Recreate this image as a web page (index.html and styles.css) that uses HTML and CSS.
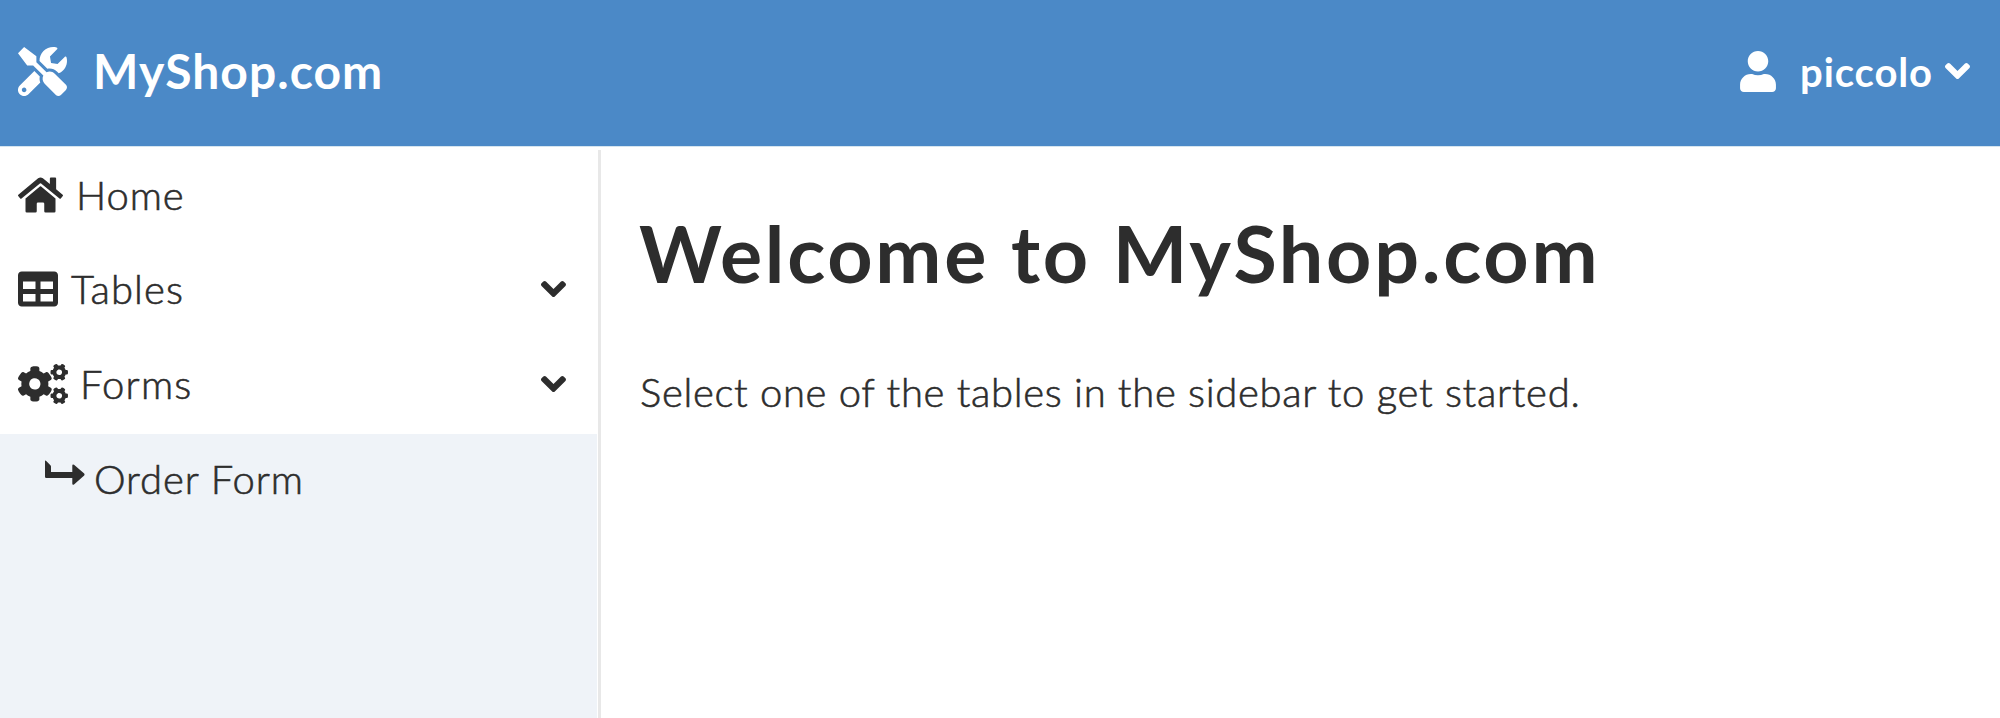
FILE: index.html
```html
<!DOCTYPE html>
<html lang="en">
<head>
<meta charset="utf-8">
<title>MyShop.com</title>
<link rel="stylesheet" href="styles.css">
</head>
<body>
<header class="topbar">
  <a class="brand">
    <svg class="brand-icon" viewBox="0 0 512 512"><path d="M501.1 395.7L384 278.6c-23.1-23.1-57.6-27.6-85.4-13.9L192 158.1V96L64 0 0 64l96 128h62.1l106.6 106.6c-13.6 27.8-9.2 62.3 13.9 85.4l117.1 117.1c14.6 14.6 38.2 14.6 52.7 0l52.7-52.7c14.5-14.6 14.5-38.2 0-52.7zM331.7 225c28.3 0 54.9 11 74.9 31l19.4 19.4c15.8-6.9 30.8-16.5 43.8-29.5 37.1-37.1 49.7-89.3 37.9-136.7-2.2-9-13.5-12.1-20.1-5.5l-74.4 74.4-67.9-11.3L334 98.9l74.4-74.4c6.6-6.6 3.4-17.9-5.7-20.2-47.4-11.7-99.6.9-136.6 37.9-28.5 28.5-41.9 66.1-41.2 103.6l82.1 82.1c8.1-1.9 16.5-2.9 24.7-2.9zm-103.9 82l-56.7-56.7L18.7 402.8c-25 25-25 65.5 0 90.5s65.5 25 90.5 0l123.6-123.6c-7.6-19.9-9.9-41.6-5-62.7zM64 472c-13.2 0-24-10.8-24-24 0-13.3 10.7-24 24-24s24 10.7 24 24c0 13.2-10.7 24-24 24z"/></svg>
    <span class="brand-name">MyShop.com</span>
  </a>
  <div class="account">
    <svg class="account-icon" viewBox="0 0 448 512"><path d="M224 256c70.7 0 128-57.3 128-128S294.7 0 224 0 96 57.3 96 128s57.3 128 128 128zm89.6 32h-16.7c-22.2 10.2-46.9 16-72.9 16s-50.6-5.8-72.9-16h-16.7C60.2 288 0 348.2 0 422.4V464c0 26.5 21.5 48 48 48h352c26.5 0 48-21.5 48-48v-41.6c0-74.2-60.2-134.4-134.4-134.4z"/></svg>
    <span class="account-name">piccolo</span>
    <svg class="angle" viewBox="0 0 320 512"><path d="M143 352.3L7 216.3c-9.4-9.4-9.4-24.6 0-33.9l22.6-22.6c9.4-9.4 24.6-9.4 33.9 0l96.4 96.4 96.4-96.4c9.4-9.4 24.6-9.4 33.9 0l22.6 22.6c9.4 9.4 9.4 24.6 0 33.9l-136 136c-9.2 9.4-24.4 9.4-33.8 0z"/></svg>
  </div>
</header>
<div class="layout">
  <nav class="sidebar">
    <a class="item">
      <svg class="icon-home" viewBox="0 0 576 512"><path d="M280.37 148.26L96 300.11V464a16 16 0 0 0 16 16l112.06-.29a16 16 0 0 0 15.92-16V368a16 16 0 0 1 16-16h64a16 16 0 0 1 16 16v95.64a16 16 0 0 0 16 16.05L464 480a16 16 0 0 0 16-16V300L295.67 148.26a12.19 12.19 0 0 0-15.3 0zM571.6 251.47L488 182.56V44.05a12 12 0 0 0-12-12h-56a12 12 0 0 0-12 12v72.61L318.47 43a48 48 0 0 0-61 0L4.34 251.47a12 12 0 0 0-1.6 16.9l25.5 31A12 12 0 0 0 45.15 301l235.22-193.74a12.19 12.19 0 0 1 15.3 0L530.9 301a12 12 0 0 0 16.9-1.6l25.5-31a12 12 0 0 0-1.7-16.93z"/></svg>
      <span class="label label-home">Home</span>
    </a>
    <a class="item">
      <svg class="icon-table" viewBox="0 0 512 512"><path d="M464 32H48C21.49 32 0 53.49 0 80v352c0 26.51 21.49 48 48 48h416c26.51 0 48-21.49 48-48V80c0-26.51-21.49-48-48-48zM224 416H64v-96h160v96zm0-160H64v-96h160v96zm224 160H288v-96h160v96zm0-160H288v-96h160v96z"/></svg>
      <span class="label label-tables">Tables</span>
      <svg class="angle" viewBox="0 0 320 512"><path d="M143 352.3L7 216.3c-9.4-9.4-9.4-24.6 0-33.9l22.6-22.6c9.4-9.4 24.6-9.4 33.9 0l96.4 96.4 96.4-96.4c9.4-9.4 24.6-9.4 33.9 0l22.6 22.6c9.4 9.4 9.4 24.6 0 33.9l-136 136c-9.2 9.4-24.4 9.4-33.8 0z"/></svg>
    </a>
    <a class="item">
      <svg class="icon-cogs" viewBox="0 0 640 512"><path d="M512.1 191l-8.2 14.3c-3 5.3-9.4 7.5-15.1 5.4-11.8-4.4-22.6-10.7-32.1-18.6-4.6-3.8-5.8-10.5-2.8-15.7l8.2-14.3c-6.9-8-12.3-17.3-15.9-27.4h-16.5c-6 0-11.2-4.3-12.2-10.3-2-12-2.1-24.6 0-37.1 1-6 6.2-10.4 12.2-10.4h16.5c3.6-10.1 9-19.4 15.9-27.4l-8.2-14.3c-3-5.2-1.9-11.9 2.8-15.7 9.5-7.9 20.4-14.2 32.1-18.6 5.7-2.1 12.1.1 15.1 5.4l8.2 14.3c10.5-1.9 21.2-1.9 31.7 0L552 6.3c3-5.3 9.4-7.5 15.1-5.4 11.8 4.4 22.6 10.7 32.1 18.6 4.6 3.8 5.8 10.5 2.8 15.7l-8.2 14.3c6.9 8 12.3 17.3 15.9 27.4h16.5c6 0 11.2 4.3 12.2 10.3 2 12 2.1 24.6 0 37.1-1 6-6.2 10.4-12.2 10.4h-16.5c-3.6 10.1-9 19.4-15.9 27.4l8.2 14.3c3 5.2 1.9 11.9-2.8 15.7-9.5 7.9-20.4 14.2-32.1 18.6-5.7 2.1-12.1-.1-15.1-5.4l-8.2-14.3c-10.4 1.9-21.2 1.9-31.7 0zm-10.5-58.8c38.5 29.6 82.4-14.3 52.8-52.8-38.5-29.7-82.4 14.3-52.8 52.8zM386.3 286.1l33.7 16.8c10.1 5.8 14.5 18.1 10.5 29.1-8.9 24.2-26.4 46.4-42.6 65.8-7.4 8.9-20.2 11.1-30.3 5.3l-29.1-16.8c-16 13.7-34.6 24.6-54.9 31.7v33.6c0 11.6-8.3 21.6-19.7 23.6-24.6 4.2-50.4 4.4-75.9 0-11.5-2-20-11.9-20-23.6V418c-20.3-7.2-38.9-18-54.9-31.7L74 403c-10 5.8-22.9 3.6-30.3-5.3-16.2-19.4-33.3-41.6-42.2-65.7-4-10.9.4-23.2 10.5-29.1l33.3-16.8c-3.9-20.9-3.9-42.4 0-63.4L12 205.8c-10.1-5.8-14.6-18.1-10.5-29 8.9-24.2 26-46.4 42.2-65.8 7.4-8.9 20.2-11.1 30.3-5.3l29.1 16.8c16-13.7 34.6-24.6 54.9-31.7V57.1c0-11.5 8.2-21.5 19.6-23.5 24.6-4.2 50.5-4.4 76-.1 11.5 2 20 11.9 20 23.6v33.6c20.3 7.2 38.9 18 54.9 31.7l29.1-16.8c10-5.8 22.9-3.6 30.3 5.3 16.2 19.4 33.2 41.6 42.1 65.8 4 10.9.1 23.2-10 29.1l-33.7 16.8c3.9 21 3.9 42.5 0 63.5zm-117.6 21.1c59.2-77-28.7-164.9-105.7-105.7-59.2 77 28.7 164.9 105.7 105.7z"/><path d="M512.1 503.4l-8.2 14.3c-3 5.3-9.4 7.5-15.1 5.4-11.8-4.4-22.6-10.7-32.1-18.6-4.6-3.8-5.8-10.5-2.8-15.7l8.2-14.3c-6.9-8-12.3-17.3-15.9-27.4h-16.5c-6 0-11.2-4.3-12.2-10.3-2-12-2.1-24.6 0-37.1 1-6 6.2-10.4 12.2-10.4h16.5c3.6-10.1 9-19.4 15.9-27.4l-8.2-14.3c-3-5.2-1.9-11.9 2.8-15.7 9.5-7.9 20.4-14.2 32.1-18.6 5.7-2.1 12.1.1 15.1 5.4l8.2 14.3c10.5-1.9 21.2-1.9 31.7 0l8.2-14.3c3-5.3 9.4-7.5 15.1-5.4 11.8 4.4 22.6 10.7 32.1 18.6 4.6 3.8 5.8 10.5 2.8 15.7l-8.2 14.3c6.9 8 12.3 17.3 15.9 27.4h16.5c6 0 11.2 4.3 12.2 10.3 2 12 2.1 24.6 0 37.1-1 6-6.2 10.4-12.2 10.4h-16.5c-3.6 10.1-9 19.4-15.9 27.4l8.2 14.3c3 5.2 1.9 11.9-2.8 15.7-9.5 7.9-20.4 14.2-32.1 18.6-5.7 2.1-12.1-.1-15.1-5.4l-8.2-14.3c-10.4 1.9-21.2 1.9-31.7 0zm-10.5-58.8c38.5 29.6 82.4-14.3 52.8-52.8-38.5-29.7-82.4 14.3-52.8 52.8z" transform="translate(0 -12)"/></svg>
      <span class="label label-forms">Forms</span>
      <svg class="angle" viewBox="0 0 320 512"><path d="M143 352.3L7 216.3c-9.4-9.4-9.4-24.6 0-33.9l22.6-22.6c9.4-9.4 24.6-9.4 33.9 0l96.4 96.4 96.4-96.4c9.4-9.4 24.6-9.4 33.9 0l22.6 22.6c9.4 9.4 9.4 24.6 0 33.9l-136 136c-9.2 9.4-24.4 9.4-33.8 0z"/></svg>
    </a>
    <div class="submenu">
      <a class="item subitem">
        <svg class="icon-sub" viewBox="0 0 40 26"><path d="M0 1.2Q0 0 1 .7L5.2 4.9Q6 5.6 6 6.600V12H27.300V5.800Q27.300 3.800 29 4.800L39.200 13.600Q40 14.500 39.200 15.400L29 24.400Q27.300 25.400 27.300 23.400V18H1.200Q0 18 0 16.800Z"/></svg>
        <span class="label label-order">Order Form</span>
      </a>
    </div>
  </nav>
  <main class="content">
    <h1 class="title">Welcome to MyShop.com</h1>
    <p class="intro">Select one of the tables in the sidebar to get started.</p>
  </main>
</div>
</body>
</html>
```
FILE: styles.css
```css
* { box-sizing: border-box; }

body {
  margin: 0;
  height: 718px;
  display: flex;
  flex-direction: column;
  overflow: hidden;
  background: #fff;
  color: #2d2d2d;
  font-family: Lato, "Open Sans", sans-serif;
  font-size: 40px;
  line-height: 48px;
}

svg { display: block; flex: none; fill: currentColor; overflow: visible; }

.topbar {
  flex: none;
  height: 147px;
  padding: 0 30px 4px 18px;
  display: flex;
  align-items: center;
  justify-content: space-between;
  background: #4b89c7;
  border-bottom: 1px solid #d5e5f0;
  color: #fff;
  font-weight: 700;
}

.brand { display: flex; align-items: center; gap: 26px; }
.brand-icon { width: 49px; height: 49px; }
.brand-name { font-size: 48px; line-height: 58px; letter-spacing: 1.05px; }

.account { display: flex; align-items: center; }
.account-icon { width: 36px; height: 41px; margin-right: 24px; }
.account-name { letter-spacing: 0.9px; margin: 2px 12px 0 0; }

.angle { width: 25px; height: 40px; }

.layout { flex: 1; display: flex; padding-top: 3px; }

.sidebar {
  width: 601px;
  flex: none;
  display: flex;
  flex-direction: column;
  padding-right: 1px;
  border-right: 3px solid #e8e8e8;
}

.item {
  display: flex;
  align-items: center;
  height: 94.67px;
  padding: 0 31px 5.6px 18px;
}
.item .angle { margin-left: auto; }

.icon-home { width: 45px; height: 40px; margin-right: 13px; }
.icon-table { width: 40px; height: 40px; margin-right: 13px; }
.icon-cogs { width: 50px; height: 40px; margin-right: 12px; }
.icon-sub { width: 40px; height: 26px; margin: -11px 9px 0 0; }

.label { font-weight: 300; -webkit-text-stroke: 0.6px currentColor; }
.label-home { letter-spacing: 0.9px; }
.label-tables { letter-spacing: 1.1px; }
.label-forms { letter-spacing: 1.2px; }
.label-order { letter-spacing: 0.9px; }

.submenu { flex: 1; background: #eff3f8; }
.subitem { padding-left: 45px; }

.content { flex: 1; padding: 55px 0 0 38px; }

.title {
  margin: 0 0 66.5px;
  font-size: 79px;
  line-height: 96px;
  font-weight: 700;
  letter-spacing: 2.7px;
}

.intro {
  margin: 0 0 0 1px;
  font-weight: 300;
  letter-spacing: 0.68px;
  -webkit-text-stroke: 0.6px currentColor;
}
```
